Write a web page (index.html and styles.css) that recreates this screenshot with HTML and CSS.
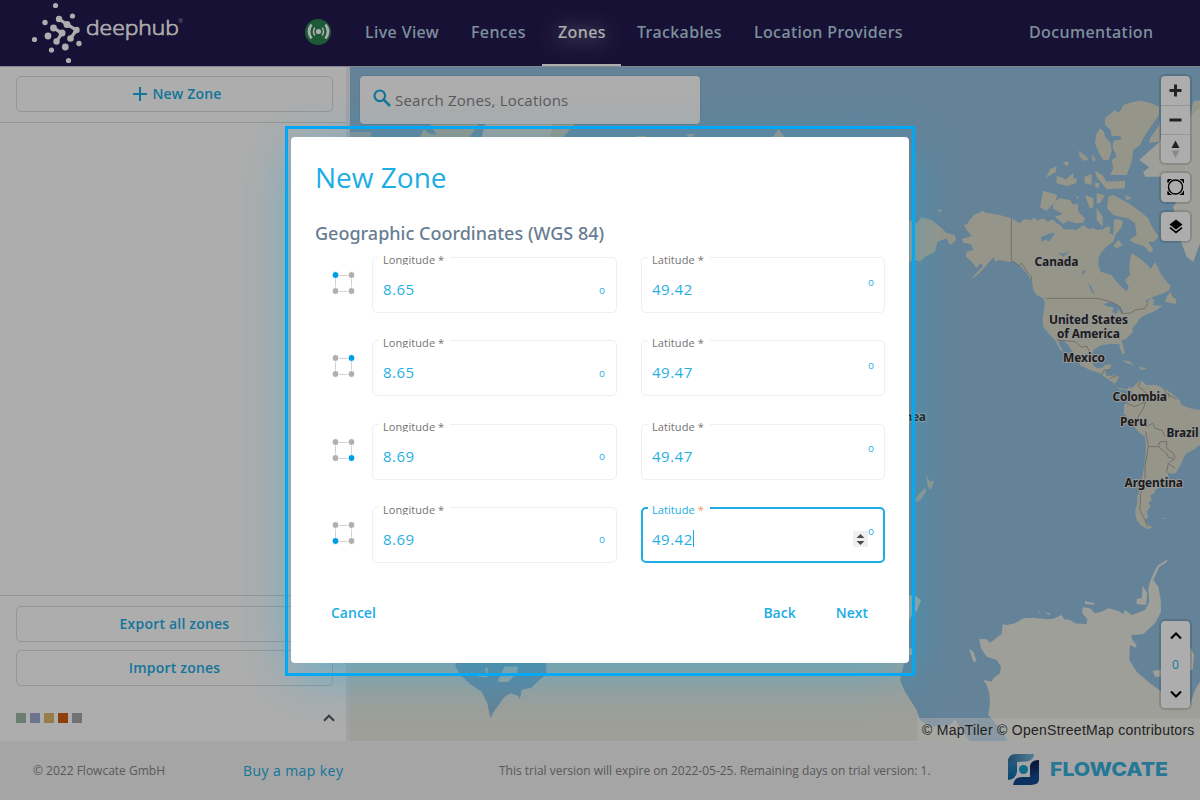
FILE: index.html
```html
<!DOCTYPE html>
<html lang="en">
<head>
<meta charset="utf-8">
<title>deephub - Zones</title>
<link rel="stylesheet" href="styles.css">
</head>
<body>
<div class="app">
  <header class="header">
    <svg class="brand" width="160" height="66" viewBox="30 0 160 66">
      <g fill="#fff">
        <circle cx="55.5" cy="5.5" r="2.6"/><circle cx="72.5" cy="16" r="2.6"/><circle cx="45" cy="22.500" r="2.7"/>
        <circle cx="34.500" cy="39.500" r="2.600"/><circle cx="48" cy="36" r="3.400"/><circle cx="51.500" cy="50" r="2.600"/>
        <circle cx="65.300" cy="47" r="3.400"/><circle cx="79" cy="43.500" r="2.700"/><circle cx="68.500" cy="60.500" r="2.600"/>
        <circle cx="59" cy="19" r="3.200"/><circle cx="67" cy="24.500" r="3.500"/><circle cx="76.500" cy="30" r="3.200"/><circle cx="70.500" cy="38.500" r="3.300"/>
        <circle cx="53.500" cy="28" r="3.400"/><circle cx="62" cy="33" r="3.500"/><circle cx="56.500" cy="41.500" r="3.200"/>
      </g>
      <path d="M59 19L67 24.500L76.500 30L70.500 38.500M53.500 28L62 33L56.500 41.500" fill="none" stroke="#fff" stroke-width="3.200"/>
      <text class="brand-name" x="86" y="35" textLength="93" lengthAdjust="spacingAndGlyphs">deephub</text>
      <text class="brand-mark" x="178" y="22.500">®</text>
    </svg>
    <svg class="signal" width="26" height="26" viewBox="0 0 26 26">
      <circle cx="13" cy="13" r="13" fill="#2c8450"/>
      <circle cx="13.500" cy="12.500" r="2.600" fill="#fff"/>
      <g fill="none" stroke="#fff"><path d="M9.800 8.700Q7.300 12.500 9.800 16.500M17.200 8.700Q19.700 12.500 17.200 16.500" stroke-width="1.500"/><path d="M6.500 5.500Q1.500 12.500 6.500 19.500M20.500 5.500Q25.500 12.500 20.500 19.500" stroke-width="2.700"/></g>
    </svg>
    <nav class="nav">
      <a class="tab tab-live">Live View</a><a class="tab tab-fences">Fences</a><a class="tab tab-zones active">Zones</a><a class="tab tab-track">Trackables</a><a class="tab tab-loc">Location Providers</a>
    </nav>
    <a class="tab docs">Documentation</a>
  </header>

  <main class="main">
    <aside class="sidebar">
      <div class="side-top">
        <button class="outlined add"><svg width="14" height="14" viewBox="0 0 14 14"><path d="M7 0V14M0 7H14" stroke="#1badE4" stroke-width="2"/></svg>New Zone</button>
      </div>
      <div class="side-list"></div>
      <div class="side-actions">
        <button class="outlined">Export all zones</button>
        <button class="outlined">Import zones</button>
      </div>
      <div class="legend">
        <i class="swatch green"></i><i class="swatch blue"></i><i class="swatch gold"></i><i class="swatch orange"></i><i class="swatch gray"></i>
        <svg class="legend-chevron" width="12" height="8" viewBox="0 0 12 8"><path d="M1 6.700L6 1.700L11 6.700" fill="none" stroke="#555" stroke-width="2"/></svg>
      </div>
    </aside>

    <section class="map">
      <svg class="map-canvas" width="850" height="674" viewBox="350 67 850 674">
        <g transform="translate(900 60) scale(.33333)">
          <g class="land">
            <path d="M192 495L203 492 207 482 225 462 240 458 248 452 258 460 272 460 300 466 335 475 360 490 372 478 395 480 402 472 412 482 425 476 437 478 440 486 458 478 470 490 480 495 490 508 508 508 530 510 550 495 568 508 580 503 592 510 610 508 618 500 632 500 628 520 640 525 642 478 655 478 668 482 665 500 655 515 648 520 640 545 625 555 605 575 595 595 595 615 602 635 635 645 650 665 665 682 680 694 686 680 675 660 690 645 688 625 690 600 695 580 712 590 722 598 745 617 752 628 765 607 775 625 785 645 800 665 812 678 808 690 790 700 760 710 735 724 740 728 755 714 763 720 758 735 788 738 760 755 735 765 720 775 710 790 697 805 700 815 680 835 665 842 670 860 675 880 668 883 660 865 658 852 630 852 605 855 580 870 575 890 580 915 590 925 605 925 615 915 635 912 630 925 615 935 620 948 657 946 650 965 641 973 660 985 682 988 690 980 697 990 680 990 658 988 640 968 620 955 600 940 570 930 540 915 535 902 520 880 505 855 490 842 475 840 478 855 490 875 480 870 465 840 445 820 430 800 428 775 432 750 435 730 430 715 410 705 400 690 395 660 380 640 365 622 345 605 325 605 300 600 285 605 282 592 265 608 255 622 235 642 212 658 235 633 250 618 240 610 230 625 215 605 198 590 200 575 220 570 212 552 190 548 185 538 205 532 215 528 200 510Z"/>
            <path d="M663 150L670 135 690 128 720 122 750 128 777 140 777 165 760 190 745 210 730 235 720 255 700 270 695 305 680 345 630 345 640 325 635 300 650 290 638 262 640 242 665 238 660 228 635 228 632 210 615 195 615 175 645 150 655 158Z"/>
            <path d="M600 205L612 215 615 230 632 250 635 275 625 300 610 300 600 285 585 250 588 225ZM625 410L640 405 650 410 685 430 715 450 745 475 750 490 775 530 762 545 745 545 760 570 750 578 735 560 705 550 688 540 710 525 705 490 685 475 660 470 640 465 621 445Z"/>
            <path d="M438 353L450 328 470 318 468 335ZM430 392L472 405 465 425 440 452 420 442ZM460 425L480 415 510 420 520 435 533 430 535 455 555 475 550 488 525 490 505 482 490 492 465 470 488 462 458 445ZM470 347L498 358 520 338 520 355 531 358 528 370 500 378 470 370ZM535 272L560 290 565 300 552 302 540 290ZM575 282L588 300 578 305ZM553 350L575 342 575 375 555 370ZM585 332L607 345 620 365 675 362 675 385 620 388 605 370 590 350ZM555 405L580 415 580 440 570 447ZM590 400L615 405 600 430 590 430ZM590 445L608 470 608 500 590 480ZM490 310L500 303 507 310 500 318ZM675 405L695 415 680 420ZM585 368L598 370 597 383 586 382ZM640 558L655 540 668 555 650 565ZM528 408L536 410 532 418Z"/>
            <path d="M27 480L50 490 65 472 95 480 125 505 140 520 165 525 168 540 150 555 140 535 112 545 105 575 75 590 60 605 45 600 27 605ZM110 452L125 448 122 456ZM800 712L810 695 818 710 830 720 826 732 795 725ZM665 900L690 905 702 915 680 910ZM715 920L740 925 725 930ZM785 1374L800 1374 792 1377ZM250 918h4v3h-4Z"/>
            <path d="M693 988L715 965 722 960 740 975 770 975 790 985 815 1000 838 1020 845 1035 870 1045 900 1050 900 1155 880 1170 860 1180 850 1195 845 1210 835 1225 828 1238 815 1242 800 1235 805 1245 805 1260 800 1265 780 1280 765 1290 765 1300 750 1305 755 1320 745 1330 752 1340 740 1355 745 1370 735 1380 745 1395 758 1402 745 1408 725 1398 710 1380 705 1355 712 1330 712 1310 722 1280 728 1245 735 1200 738 1160 735 1130 715 1115 700 1095 685 1075 672 1060 672 1035 685 1025 700 1005Z"/>
            <path d="M78 1245L90 1265 102 1262 95 1285 88 1290 82 1270ZM73 1285L80 1293 60 1322 45 1327 50 1310ZM750 235L775 200 780 180 780 245 748 248Z"/>
          </g>
          <path class="ice" d="M718 300L745 275 780 245 800 160 868 175 885 122 900 122 900 550 880 605 860 590 845 550 820 440 830 425 830 350 735 350 730 335 748 322Z"/>
          <path class="land" d="M868 178L880 125 900 122 900 145 885 155Z"/>
          <path class="water" d="M423 532L450 520 465 518 455 535 445 546 440 538 425 545ZM474 580L494 580 512 571 490 590ZM608 733L635 725 655 735 670 755 665 762 655 748 650 762 637 757 640 742 625 740ZM562 665L574 680 585 705 575 695ZM545 635L557 630 550 645Z"/>
          <path class="border" d="M334 475V602L345 608 355 618 365 610 385 640 395 650 395 662M437 715H595L630 725 660 740 665 760 690 760 705 750 735 745 745 728M470 840L525 845 545 862 560 858 575 890M605 945L612 930 630 930M630 955L655 945M722 962L715 980 730 990 740 1005 737 1025 705 1040 680 1030M790 985L800 1000 830 1018M805 1000L808 1015M737 1025L730 1045 712 1075M740 1100L758 1090 765 1105 785 1110 795 1128M737 1115L740 1130 745 1160 775 1160 780 1145 800 1145 800 1165 820 1180 825 1195 805 1210 825 1225M775 1160L800 1180 805 1192 820 1195M805 1210L800 1235M745 1160L735 1220 735 1260 722 1300 720 1350 735 1380 742 1400"/>
          <g class="ice">
            <path d="M265 1965L270 1930 268 1900 260 1875 250 1860 275 1865 280 1855 300 1840 303 1820 290 1800 260 1790 243 1765 238 1737 260 1738 270 1748 305 1722 308 1693 320 1695 345 1690 370 1675 400 1673 440 1678 460 1676 485 1665 492 1678 510 1680 525 1690 560 1693 562 1678 547 1660 548 1642 570 1645 585 1660 605 1655 625 1645 655 1653 670 1662 675 1650 695 1665 735 1650 748 1625 745 1585 752 1560 765 1530 775 1515 803 1498 800 1507 778 1520 760 1560 775 1580 782 1620 783 1655 765 1690 730 1722 693 1726 697 1740 710 1755 707 1763 690 1755 688 1800 710 1835 750 1870 782 1893 800 1935 870 1935 885 1890 900 1865 900 2045 325 2045 295 2000Z"/>
            <path d="M207 1767L220 1775 230 1805 220 1805ZM728 1577L742 1600 738 1635 710 1632 710 1617 725 1615ZM555 1623L585 1630 580 1634 555 1632ZM758 1832L782 1830 782 1850 765 1850ZM870 1760L882 1785 878 1830 870 1830ZM437 1657L453 1662 445 1665ZM415 1652L421 1654 417 1657ZM27 1605L50 1610 63 1620 50 1655 40 1655 27 1680ZM20 1765H36V1785H20ZM0 1825L0 1860 15 1895 50 1950 60 1980 90 2000 150 1995 165 1978 185 2010 210 2045H0Z"/>
          </g>
        </g>
        <path class="ice" d="M350 660H905L900 680 905 698 917 720 917 741H350Z"/>
        <path class="water" transform="translate(340 640) scale(.3827)" d="M302 60V69L312 88 340 115 370 135 385 165 393 205 400 190 430 148 445 140 465 145 470 155 475 130 500 125 515 110 540 88 538 60Z"/>
        <path class="ice" transform="translate(340 640) scale(.3827)" d="M355 88L380 92 380 72 386 72 386 97 365 97ZM420 110L412 108 430 69H465L463 85 440 110Z"/>
        <g transform="translate(400 0) scale(.33333)"><path class="land" d="M60 411L72 388 85 400 110 405 90 372H235L210 411ZM450 372H525L490 411H450ZM1118 411L1135 388 1155 411ZM858 402H887L875 411 867 411ZM710 408H738V412H710Z"/><path class="ice" d="M255 372H460L450 411H245Z"/></g>
        <path d="M350 132H371V140H350Z" fill="#ccd2d6"/>
        <g class="place">
          <text x="1034.500" y="266" textLength="44">Canada</text>
          <text x="1049" y="323.500" textLength="79">United States</text>
          <text x="1057" y="338" textLength="63">of America</text>
          <text x="1063" y="362" textLength="42">Mexico</text>
          <text x="1112.500" y="400.500" textLength="54.500">Colombia</text>
          <text x="1120" y="426" textLength="27">Peru</text>
          <text x="1166.500" y="437" textLength="32">Brazil</text>
          <text x="1124.500" y="487" textLength="58.500">Argentina</text>
          <text x="818" y="421" textLength="108">Papua New Guinea</text>
        </g>
      </svg>

      <div class="search">
        <svg width="18" height="18" viewBox="0 0 18 18"><circle cx="6.800" cy="6.800" r="5.300" fill="none" stroke="#1badE4" stroke-width="2.200"/><path d="M10.700 10.700L17 17" stroke="#1badE4" stroke-width="2.600"/></svg>
        <span>Search Zones, Locations</span>
      </div>

      <div class="controls">
        <div class="ctl-group">
          <div class="ctl"><svg width="29" height="29"><path d="M14.500 8.500V20.500M8.500 14.500H20.500" stroke="#333" stroke-width="3"/></svg></div>
          <div class="ctl"><svg width="29" height="28"><path d="M8.500 14H20.500" stroke="#333" stroke-width="3"/></svg></div>
          <div class="ctl"><svg width="29" height="28"><path d="M10.500 13L14.500 5.500L18.500 13Z" fill="#333"/><path d="M10.500 15.500L14.500 23L18.500 15.500Z" fill="#ccc"/></svg></div>
        </div>
        <div class="ctl-group"><div class="ctl"><svg width="29" height="29" fill="none" stroke="#000"><circle cx="14.500" cy="14" r="7" stroke-width="1.400"/><path d="M7 10V6.500H10.500M19 6.500H22.500V10M22.500 18V21.500H19M10.500 21.500H7V18" stroke-width="1"/><path d="M7 6.500H9.500L7 9ZM22.500 6.500V9L20 6.500ZM22.500 21.500H20L22.500 19ZM7 21.500V19L9.500 21.500Z" fill="#000"/></svg></div></div>
        <div class="ctl-group"><div class="ctl"><svg width="29" height="29"><path d="M15 7.500L21.500 12.500 15 17.500 8.500 12.500Z"/><path d="M9 15.700L15 20.400 21 15.700" fill="none" stroke="#000" stroke-width="1.700"/></svg></div></div>
        <div class="ctl-group floor">
          <div class="ctl"><svg width="29" height="29"><path d="M10 17.500L15 12.500L20 17.500" fill="none" stroke="#000" stroke-width="2"/></svg></div>
          <div class="ctl level">0</div>
          <div class="ctl"><svg width="29" height="29"><path d="M10 12.500L15 17.500L20 12.500" fill="none" stroke="#000" stroke-width="2"/></svg></div>
        </div>
      </div>
      <div class="attribution">© MapTiler © OpenStreetMap contributors</div>
    </section>
  </main>

  <footer class="footer">
    <span class="copyright">© 2022 Flowcate GmbH</span>
    <a class="buy">Buy a map key</a>
    <span class="trial">This trial version will expire on 2022-05-25. Remaining days on trial version: 1.</span>
    <svg class="flowcate" width="160" height="32" viewBox="0 0 160 32">
      <defs>
        <linearGradient id="g1"><stop offset="0" stop-color="#28729f"/><stop offset="1" stop-color="#80b8dc"/></linearGradient>
        <linearGradient id="g2" x2="0" y2="1"><stop offset="0" stop-color="#101f50"/><stop offset="1" stop-color="#1656a0"/></linearGradient>
        <linearGradient id="g3" x2="0" y2="1"><stop offset="0" stop-color="#3686b9"/><stop offset="1" stop-color="#086ba7"/></linearGradient>
      </defs>
      <path d="M0 8Q0 0 8 0H26Q26 7 18 7.500L9 8Q4 9 0 15Z" fill="url(#g1)"/>
      <path d="M0 10Q4 7 9 8V18Q8 25 0 26Z" fill="url(#g3)"/>
      <path d="M31 6V24Q31 29 28 30L22 23V12Q23 6 31 6Z" fill="url(#g2)"/>
      <path d="M5 31Q6 23 14 23H23Q28 22 31 17V23Q31 31 23 31Z" fill="#10498d"/>
      <circle cx="15.500" cy="15.500" r="4.500" fill="#19a0d0"/>
      <text class="flowcate-name" x="42" y="22.200" textLength="118" lengthAdjust="spacingAndGlyphs">FLOWCATE</text>
    </svg>
  </footer>
</div>

<div class="backdrop">
  <div class="frame">
  <div class="dialog">
    <h2 class="title">New Zone</h2>
    <h3 class="subtitle">Geographic Coordinates (WGS 84)</h3>
    <div class="rows">
      <div class="row">
        <svg class="corner tl" width="26" height="26" viewBox="0 0 26 26"><path d="M5.500 5.500H21.500V21.500H5.500Z"/><circle cx="5.500" cy="5" r="3.500"/><circle cx="21.500" cy="5" r="3.500"/><circle cx="21.500" cy="21" r="3.500"/><circle cx="5.500" cy="21" r="3.500"/></svg>
        <div class="field lon"><label>Longitude *</label><span>8.65</span><em>o</em></div>
        <div class="field lat"><label>Latitude *</label><span>49.42</span><em>o</em></div>
      </div>
      <div class="row">
        <svg class="corner tr" width="26" height="26" viewBox="0 0 26 26"><path d="M5.500 5.500H21.500V21.500H5.500Z"/><circle cx="5.500" cy="5" r="3.500"/><circle cx="21.500" cy="5" r="3.500"/><circle cx="21.500" cy="21" r="3.500"/><circle cx="5.500" cy="21" r="3.500"/></svg>
        <div class="field lon"><label>Longitude *</label><span>8.65</span><em>o</em></div>
        <div class="field lat"><label>Latitude *</label><span>49.47</span><em>o</em></div>
      </div>
      <div class="row">
        <svg class="corner br" width="26" height="26" viewBox="0 0 26 26"><path d="M5.500 5.500H21.500V21.500H5.500Z"/><circle cx="5.500" cy="5" r="3.500"/><circle cx="21.500" cy="5" r="3.500"/><circle cx="21.500" cy="21" r="3.500"/><circle cx="5.500" cy="21" r="3.500"/></svg>
        <div class="field lon"><label>Longitude *</label><span>8.69</span><em>o</em></div>
        <div class="field lat"><label>Latitude *</label><span>49.47</span><em>o</em></div>
      </div>
      <div class="row">
        <svg class="corner bl" width="26" height="26" viewBox="0 0 26 26"><path d="M5.500 5.500H21.500V21.500H5.500Z"/><circle cx="5.500" cy="5" r="3.500"/><circle cx="21.500" cy="5" r="3.500"/><circle cx="21.500" cy="21" r="3.500"/><circle cx="5.500" cy="21" r="3.500"/></svg>
        <div class="field lon"><label>Longitude *</label><span>8.69</span><em>o</em></div>
        <div class="field lat focused"><label>Latitude <b>*</b></label><span>49.42</span><i class="caret"></i>
          <svg class="spinner" width="15" height="16"><path d="M0 0H15V16H0Z" fill="#efefef"/><path d="M3.500 7L7.500 3L11.500 7ZM3.500 10L7.500 14L11.500 10Z" fill="#4a4a4a"/></svg><em>o</em></div>
      </div>
    </div>
    <div class="actions"><button class="text-btn">Cancel</button><span class="spacer"></span><button class="text-btn">Back</button><button class="text-btn">Next</button></div>
  </div>
  </div>
</div>
</body>
</html>
```
FILE: styles.css
```css
* { box-sizing: border-box; }
body { margin: 0; width: 1200px; height: 800px; overflow: hidden; font-family: "Open Sans", "Noto Sans", sans-serif; }
svg { display: block; flex: none; }
button { font: inherit; background: none; border: 0; padding: 0; }
.app { display: flex; flex-direction: column; width: 1200px; height: 800px; background: #fff; }

.header { display: flex; align-items: stretch; height: 67px; background: #221a4f; border-bottom: 1px solid #c8c5cf; padding-left: 30px; }
.brand-name { font-family: "Open Sans", sans-serif; font-weight: 300; font-size: 20.5px; fill: #fff; stroke: #fff; stroke-width: .7px; }
.brand-mark { font-size: 6px; fill: #aaa; }
.signal { margin: 19px 0 0 115px; }
.nav { display: flex; margin-left: 18px; }
.tab { display: flex; align-items: center; height: 66px; padding: 0 0 2px 16px; font-family: "Noto Sans", sans-serif; font-size: 16px; font-weight: 500; letter-spacing: .4px; color: #bcd6e6; white-space: nowrap; }
.tab-live { width: 106px; }
.tab-fences { width: 87px; }
.tab-zones { width: 79px; }
.tab-track { width: 117px; }
.tab-loc { width: 181px; }
.active { color: #fff; padding-bottom: 0; border-bottom: 2px solid #fff; text-shadow: 0 0 20px rgba(255,255,255,.7), 0 6px 28px rgba(255,255,255,.5); }
.docs { margin-left: 94px; }

.main { display: flex; height: 674px; }
.sidebar { display: flex; flex-direction: column; width: 350px; border-right: 4px solid #eeeff0; }
.side-top { height: 56px; padding: 9px 13px 0 16px; border-bottom: 1px solid #dcdcdc; }
.outlined { display: flex; align-items: center; justify-content: center; gap: 5px; width: 317px; height: 36px; padding-bottom: 1px; border: 1px solid #dcdce0; border-radius: 5px; color: #1badE4; font-size: 14px; font-weight: 600; letter-spacing: .2px; }
.add { padding-left: 6px; }
.outlined svg { margin-top: 1px; }
.side-list { flex: 1; }
.side-actions { display: flex; flex-direction: column; gap: 8px; height: 99px; padding: 10px 13px 0 16px; border-top: 1px solid #dcdcdc; }
.legend { display: flex; align-items: center; gap: 4px; height: 47px; padding: 0 11px 0 16px; border-radius: 0 0 4px 4px; }
.swatch { width: 10px; height: 10px; }
.green { background: #9dbca8; }
.blue { background: #a0add0; }
.gold { background: #dfb86c; }
.orange { background: #d35d0f; }
.gray { background: #a8a8a8; }
.legend-chevron { margin-left: auto; }

.map { position: relative; width: 850px; height: 674px; overflow: hidden; background: #94c2e1; display: flex; justify-content: space-between; }
.map-canvas { position: absolute; left: 0; top: 0; }
.land { fill: #dddccb; }
.ice { fill: #ebebe2; }
.water { fill: #94c2e1; }
.border { fill: none; stroke: #a9a69d; stroke-width: 3; }
.place { font-family: "Noto Sans", sans-serif; font-weight: 700; font-size: 12px; fill: #2b2b2b; stroke: #dedede; stroke-width: 2px; paint-order: stroke; stroke-linejoin: round; }
.search { position: relative; display: flex; align-items: center; gap: 4px; width: 340px; height: 48px; margin: 9px 0 0 10px; padding-left: 14px; border-radius: 4px; background: #fff; box-shadow: 0 0 0 1px rgba(0,0,0,.06); font-size: 15px; letter-spacing: .22px; color: #858585; }
.search svg { margin: -5px 0 0 -1px; }
.controls { position: relative; display: flex; flex-direction: column; gap: 10px; width: 29px; margin: 9px 10px 0 0; height: 632px; }
.ctl-group { border-radius: 4px; background: #fff; box-shadow: 0 0 0 2px rgba(0,0,0,.13); }
.ctl { width: 29px; height: 29px; }
.ctl + .ctl { border-top: 1px solid #ddd; }
.floor { margin-top: auto; }
.floor .ctl { border: 0; }
.level { font-size: 12px; line-height: 29px; text-align: center; color: #1badE4; }
.attribution { position: absolute; right: 0; bottom: 0; width: 283px; height: 23px; padding-left: 5px; background: rgba(255,255,255,.5); font: 14px/24px "Liberation Sans", sans-serif; letter-spacing: .27px; color: #333; white-space: nowrap; }

.footer { position: relative; display: flex; align-items: center; height: 59px; padding: 0 0 2px 33px; background: #f3f3f3; border-top: 1px solid #f8f8f8; }
.copyright { width: 210px; font-size: 12px; color: #858585; }
.buy { width: 256px; font-size: 14px; letter-spacing: .42px; color: #1badE4; }
.trial { width: 509px; font-size: 12px; letter-spacing: -.01px; color: #858585; }
.flowcate-name { font-family: Inter, sans-serif; font-size: 19px; font-weight: 800; fill: #37b0dc; }

.backdrop { position: absolute; inset: 0; padding: 126px 0 0 285px; background: rgba(0,0,0,.32); }
.frame { width: 630px; height: 550px; padding: 8px 3px; border: 3px solid #00a8f8; }
.dialog { width: 618px; height: 526px; padding: 24px; border-radius: 4px; background: #fff; box-shadow: 0 12px 48px rgba(27,173,228,.48); }
.title { height: 34px; margin: 0; font-size: 28px; font-weight: 400; line-height: 32px; color: #1badE4; }
.subtitle { height: 26px; margin: 25px 0 11px; font-family: "Noto Sans", sans-serif; font-size: 18px; font-weight: 500; line-height: 26px; color: #697d92; }
.rows { display: grid; gap: 27.300px; }
.row { display: flex; height: 56px; }
.corner { margin: 13px 16px 0 15px; }
.corner path { fill: none; stroke: #d2d2d2; }
.corner circle { fill: #b0b0b0; stroke: #fff; stroke-width: 1; }
.tl circle:nth-of-type(1), .tr circle:nth-of-type(2), .br circle:nth-of-type(3), .bl circle:nth-of-type(4) { fill: #009de6; }
.field { position: relative; display: flex; align-items: center; width: 245px; padding: 8px 10px 0; border: 1px solid #efeff0; border-radius: 5px; font-size: 15px; letter-spacing: .5px; color: #27afe4; }
.lat { width: 244px; margin-left: 24px; }
.field label { position: absolute; left: 6px; top: -6px; padding: 0 6px 0 4px; background: #fff; font-size: 11px; letter-spacing: .08px; line-height: 15px; color: #737373; }
.lon label { height: 13px; overflow: hidden; }
.field em { margin-left: auto; margin-right: 1px; padding-top: 1px; font-size: 10px; font-style: normal; letter-spacing: 0; }
.lat em { margin-right: 0; padding: 0 0 15px; }
.focused { border: 2px solid #1badE4; padding: 8px 9px 0; }
.focused label { left: 5px; top: -7px; color: #1badE4; }
.focused b { font-weight: 400; color: #f59264; }
.caret { width: 1px; height: 17px; background: #1badE4; }
.spinner { margin-left: auto; }
.focused em { margin-left: 0; }
.actions { display: flex; gap: 40px; margin: 40px 17px 0 16px; }
.text-btn { height: 20px; font-size: 14px; font-weight: 600; line-height: 20px; color: #1badE4; }
.spacer { flex: 1; }
```
